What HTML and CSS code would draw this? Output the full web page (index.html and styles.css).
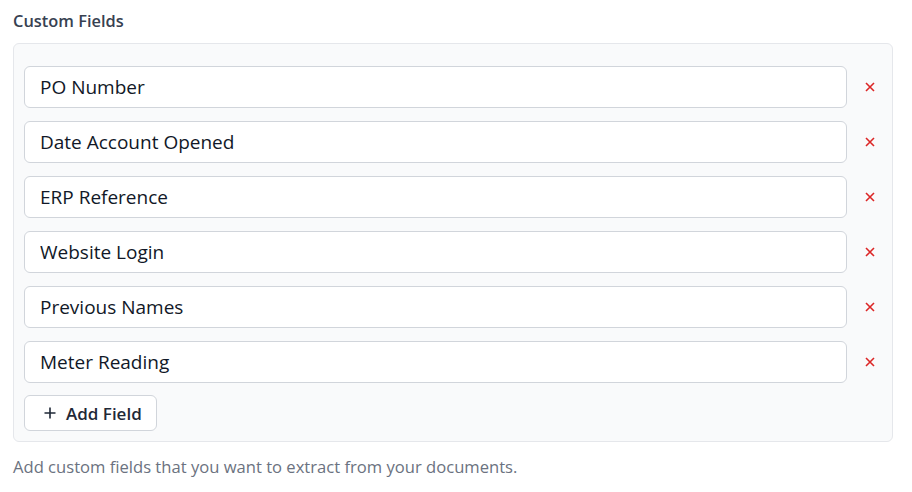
FILE: index.html
```html
<!DOCTYPE html>
<html>
<head>
<meta charset="utf-8">
<link rel="stylesheet" href="styles.css">
</head>
<body>
<div class="section">
  <div class="title">Custom Fields</div>
  <div class="panel">
    <div class="rows">
      <div class="row"><input class="field" value="PO Number"><button class="remove" aria-label="Remove"><svg viewBox="0 0 10 10" width="10" height="10"><path d="M1 1L9 9M9 1L1 9"/></svg></button></div>
      <div class="row"><input class="field" value="Date Account Opened"><button class="remove" aria-label="Remove"><svg viewBox="0 0 10 10" width="10" height="10"><path d="M1 1L9 9M9 1L1 9"/></svg></button></div>
      <div class="row"><input class="field" value="ERP Reference"><button class="remove" aria-label="Remove"><svg viewBox="0 0 10 10" width="10" height="10"><path d="M1 1L9 9M9 1L1 9"/></svg></button></div>
      <div class="row"><input class="field" value="Website Login"><button class="remove" aria-label="Remove"><svg viewBox="0 0 10 10" width="10" height="10"><path d="M1 1L9 9M9 1L1 9"/></svg></button></div>
      <div class="row"><input class="field" value="Previous Names"><button class="remove" aria-label="Remove"><svg viewBox="0 0 10 10" width="10" height="10"><path d="M1 1L9 9M9 1L1 9"/></svg></button></div>
      <div class="row"><input class="field" value="Meter Reading"><button class="remove" aria-label="Remove"><svg viewBox="0 0 10 10" width="10" height="10"><path d="M1 1L9 9M9 1L1 9"/></svg></button></div>
    </div>
    <button class="add"><svg viewBox="0 0 12 12" width="12" height="12"><path d="M6 0.5V11.5M0.5 6H11.5"/></svg><span>Add Field</span></button>
  </div>
  <div class="help">Add custom fields that you want to extract from your documents.</div>
</div>
</body>
</html>
```
FILE: styles.css
```css
* { box-sizing: border-box; }
html, body { margin: 0; padding: 0; background: #ffffff; }
body { font-family: "Open Sans", "Noto Sans", sans-serif; color: #111827; }
.section { padding: 10px 19px 0 13px; }
.title { font-size: 16.4px; font-weight: 600; color: #374151; line-height: 22px; margin-bottom: 11px; }
.panel {
  background: #f9fafb;
  border: 1px solid #e5e7eb;
  border-radius: 6px;
  padding: 22px 10px 10px 10px;
  display: flex;
  flex-direction: column;
  gap: 12px;
  align-items: flex-start;
}
.rows { display: flex; flex-direction: column; gap: 13px; width: 100%; }
.row { display: flex; align-items: center; width: 100%; }
.field {
  flex: 1;
  height: 42px;
  border: 1px solid #d1d5db;
  border-radius: 6px;
  background: #ffffff;
  padding: 0 15px;
  font-family: inherit;
  font-size: 19px;
  color: #111827;
  outline: none;
}
.remove {
  width: 35px;
  height: 42px;
  border: 0;
  background: transparent;
  display: flex;
  align-items: center;
  justify-content: flex-start;
  padding: 0 0 0 18px;
  cursor: pointer;
}
.remove svg path { stroke: #dc2626; stroke-width: 1.6; fill: none; }
.add {
  display: flex;
  align-items: center;
  gap: 10px;
  height: 36px;
  padding: 0 14px 0 19px;
  border: 1px solid #d1d5db;
  border-radius: 6px;
  background: #ffffff;
  font-family: inherit;
  font-size: 17px;
  font-weight: 600;
  color: #1f2937;
  cursor: pointer;
}
.add svg path { stroke: #1f2937; stroke-width: 1.6; fill: none; }
.help { margin-top: 14px; font-size: 16.6px; color: #6b7280; line-height: 22px; }
```
